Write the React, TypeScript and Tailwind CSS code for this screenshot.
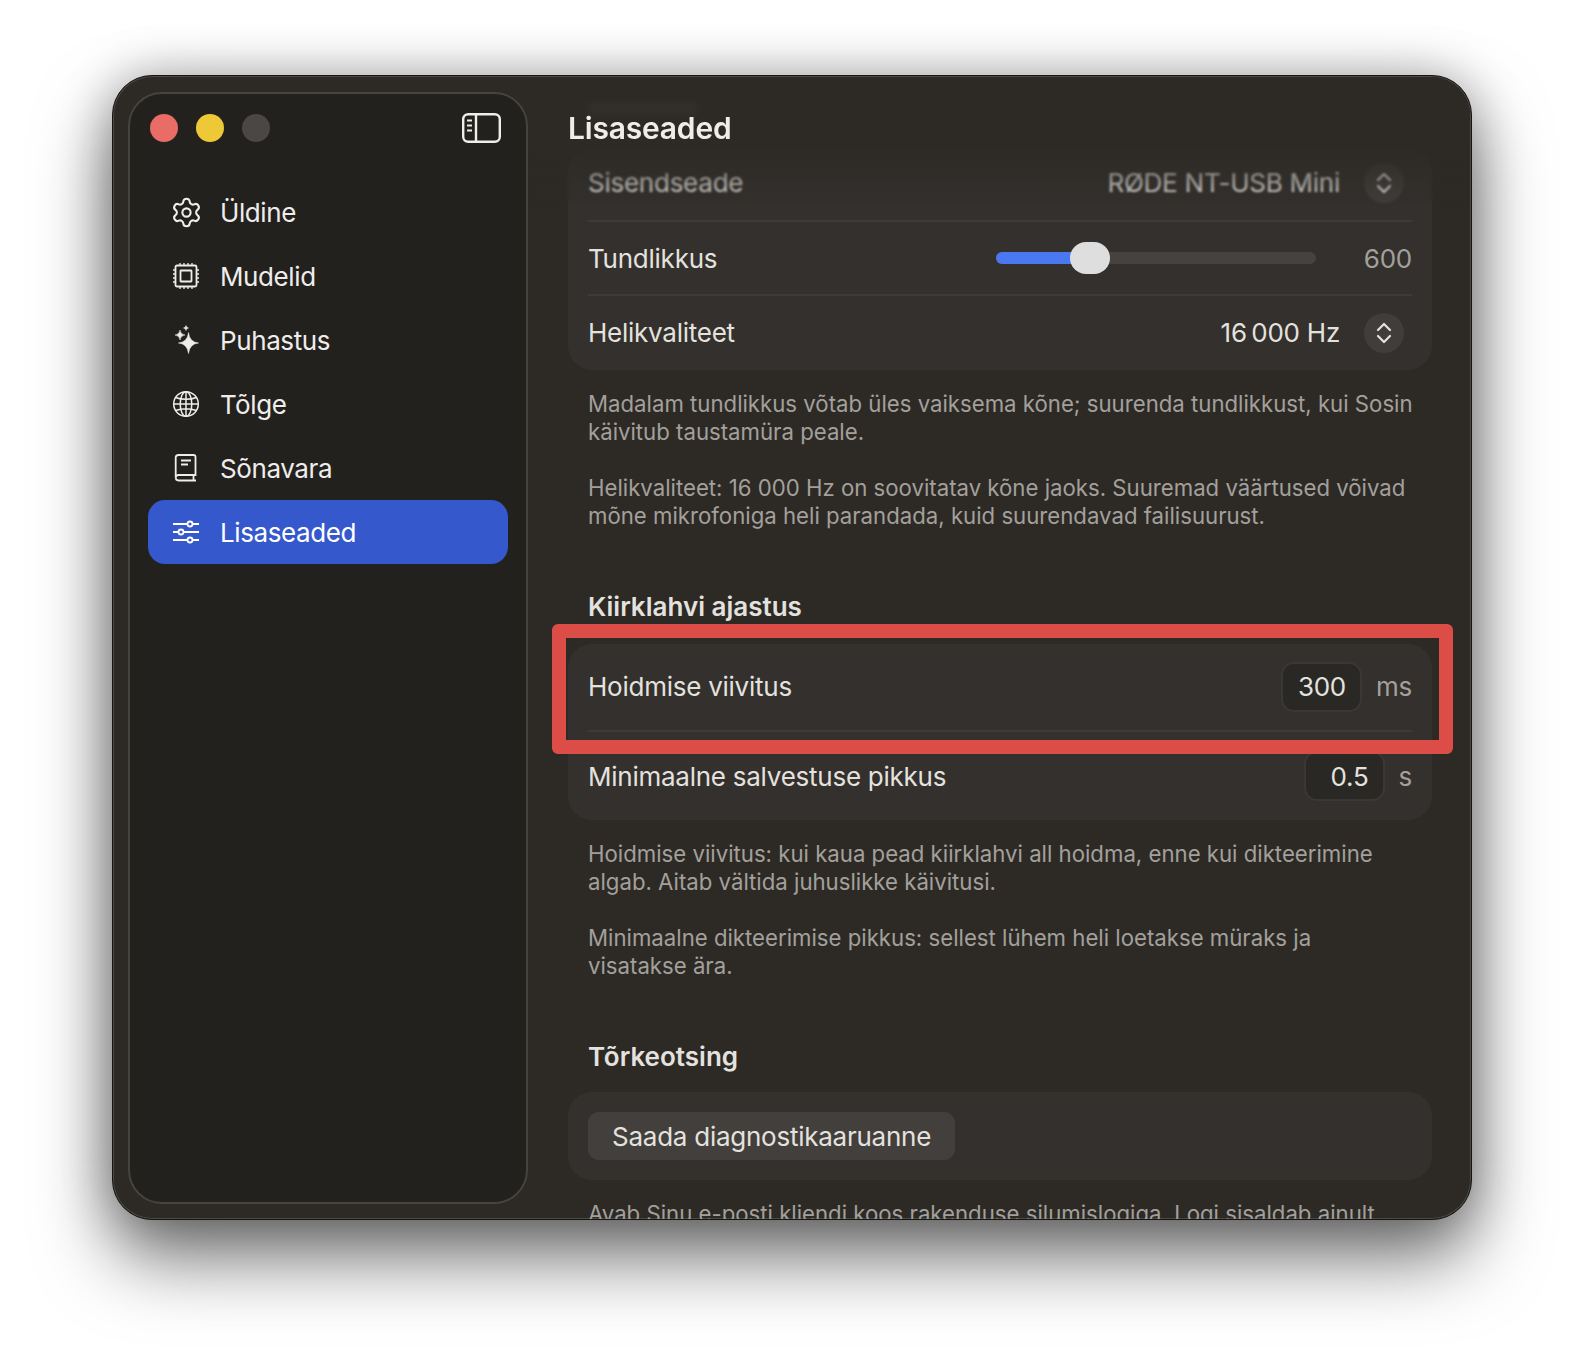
import React from 'react';
import { Settings } from 'lucide-react';

const ChipIcon = () => (
  <svg width="28" height="28" viewBox="0 0 28 28" fill="none" stroke="currentColor" strokeWidth="1.800">
    <rect x="3.500" y="3.500" width="21" height="21" rx="1.500" />
    <rect x="8.500" y="8.500" width="11" height="11" rx="0.500" />
    <path d="M8 3.500V1M12 3.500V1M16 3.500V1M20 3.500V1M8 27v-2.500M12 27v-2.500M16 27v-2.500M20 27v-2.500M1 8h2.500M1 12h2.500M1 16h2.500M1 20h2.500M24.500 8H27M24.500 12H27M24.500 16H27M24.500 20H27" strokeWidth="1.300" />
  </svg>
);

const SparkleIcon = () => (
  <svg width="25" height="30" viewBox="0 0 25 30" fill="currentColor" stroke="currentColor" strokeWidth="0.5">
    <path d="M14.500 7.500Q15.500 17 24.500 18 15.500 19 14.500 28.500 13.500 19 4.500 18 13.500 17 14.500 7.500z" />
    <path d="M6 5Q6.500 9.500 11 10 6.500 10.500 6 15 5.500 10.500 1 10 5.500 9.500 6 5z" />
    <path d="M12 .500Q12.300 2.700 14.500 3 12.300 3.300 12 5.500 11.700 3.300 9.500 3 11.700 2.700 12 .500z" />
  </svg>
);

const GlobeIcon = () => (
  <svg width="28" height="28" viewBox="0 0 28 28" fill="none" stroke="currentColor" strokeWidth="1.500">
    <circle cx="14" cy="14" r="12.300" />
    <ellipse cx="14" cy="14" rx="5.800" ry="12.300" />
    <path d="M14 1.700v24.600M1.700 14h24.600M3.600 7.500c6 2.400 14.800 2.400 20.800 0M3.600 20.500c6-2.400 14.800-2.400 20.800 0" />
  </svg>
);

const BookIcon = () => (
  <svg width="28" height="28" viewBox="0 0 28 28" fill="none" stroke="currentColor" strokeWidth="1.800">
    <path d="M6.500 1h15a2 2 0 0 1 2 2v18h-17a2.800 2.800 0 0 0-2.800 2.800V3.800a2.800 2.800 0 0 1 2.800-2.800z" />
    <path d="M3.700 23.800a2.800 2.800 0 0 0 2.800 2.700h17.500M21.500 21v5.500" />
    <path d="M9 6.500h10M9 10.500h7" />
  </svg>
);

const SlidersIcon = () => (
  <svg width="28" height="28" viewBox="0 0 28 28" fill="none" stroke="currentColor" strokeWidth="1.800">
    <path d="M1 6h14.500M20.500 6H27M1 14h5.500M11.500 14H27M1 22h14.500M20.500 22H27" />
    <circle cx="18" cy="6" r="2.500" />
    <circle cx="9" cy="14" r="2.500" />
    <circle cx="18" cy="22" r="2.500" />
  </svg>
);

const PanelIcon = () => (
  <svg width="39" height="30" viewBox="0 0 39 30" fill="none" stroke="#f0eeec" strokeWidth="2.400">
    <rect x="1.200" y="1.200" width="36.600" height="27.600" rx="5" />
    <path d="M14 1.500v27" />
    <path d="M5 7.500h5M5 12.500h5M5 17.500h5" strokeWidth="2" />
  </svg>
);

const Stepper = () => (
  <div className="flex h-10 w-10 items-center justify-center rounded-full bg-[#403d3a] text-[#e4e2df]">
    <svg width="16" height="22" viewBox="0 0 16 22" fill="none" stroke="currentColor" strokeWidth="2.200" strokeLinecap="round" strokeLinejoin="round">
      <path d="M2 8l6-6 6 6M2 14l6 6 6-6" />
    </svg>
  </div>
);

const navItems = [
  { label: 'Üldine', icon: <Settings size={33} strokeWidth={1.500} className="shrink-0" /> },
  { label: 'Mudelid', icon: <ChipIcon /> },
  { label: 'Puhastus', icon: <SparkleIcon /> },
  { label: 'Tõlge', icon: <GlobeIcon /> },
  { label: 'Sõnavara', icon: <BookIcon /> },
  { label: 'Lisaseaded', icon: <SlidersIcon />, active: true },
];

const Sidebar = () => (
  <aside className="flex h-[1112px] w-[400px] shrink-0 flex-col rounded-[34px] border-2 border-[#47443e] bg-[#23211e] px-[18px]">
    <div className="flex h-[86px] items-center justify-between pb-[18px] pl-[2px] pr-[7px]">
      <div className="flex gap-[18px]">
        <div className="h-7 w-7 rounded-full bg-[#e96c66]" />
        <div className="h-7 w-7 rounded-full bg-[#eec937]" />
        <div className="h-7 w-7 rounded-full bg-[#4a4744]" />
      </div>
      <PanelIcon />
    </div>
    <nav className="flex flex-col">
      {navItems.map(item => (
        <div
          key={item.label}
          className={`flex h-16 items-center gap-5 rounded-[17px] pl-6 text-[26px] tracking-[-0.4px] ${item.active ? 'bg-[#3558cc] text-white' : 'text-[#efedeb]'}`}
        >
          <span className="flex w-7 justify-center">{item.icon}</span>
          <span className="pt-[1px]">{item.label}</span>
        </div>
      ))}
    </nav>
  </aside>
);

const Help = ({ children }: { children: React.ReactNode }) => (
  <p className="text-[22.2px] leading-[28px] tracking-normal text-[#a3a09c]">{children}</p>
);

const Heading = ({ children }: { children: React.ReactNode }) => (
  <h3 className="pl-5 text-[26px] font-semibold leading-[32px] tracking-normal text-[#e4e2df]">{children}</h3>
);

const NumberBox = ({ value }: { value: string }) => (
  <div className="flex h-[50px] w-[81px] items-center justify-end rounded-[13px] border-2 border-[#3a3734] bg-[#2a2825] pr-[14px] text-[#e4e2df]">
    {value}
  </div>
);

export default function App() {
  return (
    <div className="h-[1368px] w-[1584px] bg-white pl-[112px] pt-[75px] font-['Inter',sans-serif]">
      <div className="flex h-[1145px] w-[1360px] overflow-hidden rounded-[40px] border border-[#151513] bg-[#2d2a26] pl-[15px] pt-4 shadow-[0_38px_75px_rgba(0,0,0,0.55),0_0_50px_rgba(0,0,0,0.28),inset_0_0_0_1px_#4d4a46]">
        <Sidebar />
        <main className="relative -mt-4 min-w-0 flex-1 overflow-hidden pb-0 pl-10 pr-[39px] pt-[72px] text-[26px] tracking-[-0.25px] text-[#e4e2df]">
          <div className="absolute left-0 right-[1px] top-[1px] z-10 h-[128px] rounded-tr-[38px] bg-gradient-to-b from-[#2d2a26] from-[52%] to-[#2d2a26]/0 backdrop-blur-[1.2px]">
            <div className="absolute left-[60px] top-[26px] h-[12px] w-[110px] rounded bg-white/[0.03] blur-[4px]" />
            <h1 className="absolute left-10 top-[31px] text-[30px] font-semibold leading-[40px] tracking-[-0.2px] text-[#efedeb]">Lisaseaded</h1>
          </div>

          <section className="rounded-[24px] bg-[#33302d] px-5">
            <div className="flex h-[74px] items-center justify-between border-b-2 border-[#3d3a37] pb-[3px]">
              <span>Sisendseade</span>
              <div className="flex items-center gap-6 pr-2">
                <span>RØDE NT-USB Mini</span>
                <Stepper />
              </div>
            </div>
            <div className="flex h-[74px] items-center justify-between border-b-2 border-[#3d3a37]">
              <span>Tundlikkus</span>
              <div className="flex items-center">
                <div className="relative h-3 w-[320px] rounded-full bg-[#45423f]">
                  <div className="h-3 w-[94px] rounded-full bg-[#4a78f0]" />
                  <div className="absolute left-[74px] top-[-10px] h-8 w-10 rounded-full bg-[#dedede]" />
                </div>
                <span className="w-[96px] text-right text-[#a3a09c]">600</span>
              </div>
            </div>
            <div className="flex h-[74px] items-center justify-between pb-[1px]">
              <span>Helikvaliteet</span>
              <div className="flex items-center gap-6 pr-2">
                <span>16{'\u202f'}000 Hz</span>
                <Stepper />
              </div>
            </div>
          </section>

          <div className="flex flex-col gap-7 pl-5 pr-3 pt-5">
            <Help>Madalam tundlikkus võtab üles vaiksema kõne; suurenda tundlikkust, kui Sosin käivitub taustamüra peale.</Help>
            <Help>Helikvaliteet: 16 000 Hz on soovitatav kõne jaoks. Suuremad väärtused võivad mõne mikrofoniga heli parandada, kuid suurendavad failisuurust.</Help>
          </div>

          <div className="pb-[21px] pt-[61px]">
            <Heading>Kiirklahvi ajastus</Heading>
          </div>

          <section className="relative rounded-[24px] bg-[#33302d] px-5">
            <div className="flex h-[88px] items-center justify-between border-b-2 border-[#3d3a37] pb-[1px]">
              <span>Hoidmise viivitus</span>
              <div className="flex items-center gap-[14px]">
                <NumberBox value="300" />
                <span className="text-[#a3a09c]">ms</span>
              </div>
            </div>
            <div className="flex h-[88px] items-center justify-between">
              <span>Minimaalne salvestuse pikkus</span>
              <div className="flex items-center gap-[14px]">
                <NumberBox value="0.5" />
                <span className="text-[#a3a09c]">s</span>
              </div>
            </div>
            <div className="pointer-events-none absolute -left-4 -right-[21px] -top-5 h-[130px] rounded-[6px] border-[14px] border-[#dd4d48]" />
          </section>

          <div className="flex flex-col gap-7 px-5 pt-5">
            <Help>Hoidmise viivitus: kui kaua pead kiirklahvi all hoidma, enne kui dikteerimine algab. Aitab vältida juhuslikke käivitusi.</Help>
            <Help>Minimaalne dikteerimise pikkus: sellest lühem heli loetakse müraks ja visatakse ära.</Help>
          </div>

          <div className="pb-[19px] pt-[61px]">
            <Heading>Tõrkeotsing</Heading>
          </div>

          <section className="rounded-[24px] bg-[#33302d] p-5">
            <button className="flex h-12 items-center rounded-[11px] bg-[#423f3c] px-6 text-[#e4e2df]">Saada diagnostikaaruanne</button>
          </section>

          <div className="px-5 pt-5">
            <Help>Avab Sinu e-posti kliendi koos rakenduse silumislogiga. Logi sisaldab ainult</Help>
          </div>
        </main>
      </div>
    </div>
  );
}
